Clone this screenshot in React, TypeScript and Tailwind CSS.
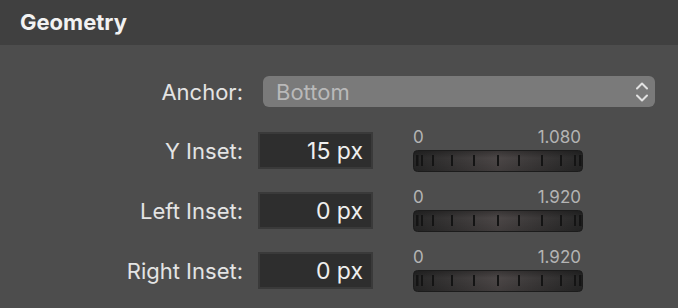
import React from "react";

const font = { fontFamily: "Inter, 'Noto Sans', sans-serif" };

function Track() {
  const ticks = [3, 8, 19, 38, 60, 84, 105, 128, 147, 161, 166];
  return (
    <svg width="170" height="22" viewBox="0 0 170 22" className="block">
      <defs>
        <linearGradient id="tg" x1="0" x2="1" y1="0" y2="0">
          <stop offset="0" stopColor="#282828" />
          <stop offset="0.5" stopColor="#4c4747" />
          <stop offset="1" stopColor="#282828" />
        </linearGradient>
        <linearGradient id="tv" x1="0" x2="0" y1="0" y2="1">
          <stop offset="0" stopColor="#000" stopOpacity="0.25" />
          <stop offset="0.35" stopColor="#000" stopOpacity="0" />
          <stop offset="1" stopColor="#000" stopOpacity="0.15" />
        </linearGradient>
      </defs>
      <rect x="0.5" y="0.5" width="169" height="21" rx="4" fill="url(#tg)" stroke="#1c1c1c" />
      <rect x="1" y="1" width="168" height="20" rx="4" fill="url(#tv)" />
      {ticks.map((t, i) => (
        <rect key={i} x={t} y={5} width={i === 0 || i === ticks.length - 1 ? 2.5 : 2} height={11} fill="#141414" />
      ))}
    </svg>
  );
}

function Row({ label, value, max }: { label: string; value: string; max: string }) {
  return (
    <div className="flex items-start h-[60px]">
      <div className="w-[243px] text-right text-[22px] leading-[37px] h-[37px] mt-[5px] text-[#e4e4e4]">
        {label}
      </div>
      <div className="ml-[15px] mt-[4px] w-[115px] h-[37px] bg-[#2e2e2e] border-2 border-[#3a3a3a] text-right pr-[8px] text-[23px] leading-[34px] text-[#efefef]">
        {value}
      </div>
      <div className="ml-[40px] w-[170px] flex flex-col">
        <div className="flex justify-between text-[17px] leading-[18px] h-[18px] text-[#b4b4b4] pr-[2px]">
          <span>0</span>
          <span>{max}</span>
        </div>
        <div className="mt-[4px]">
          <Track />
        </div>
      </div>
    </div>
  );
}

export default function App() {
  return (
    <div className="w-[678px] h-[308px] bg-[#4d4d4d] overflow-hidden" style={font}>
      <div className="h-[45px] bg-[#404040] flex items-center pl-[20px]">
        <span className="text-[22px] font-bold text-[#f2f2f2]">Geometry</span>
      </div>
      <div className="flex items-center mt-[31px] h-[31px]">
        <div className="w-[243px] text-right text-[22px] leading-[31px] pt-[1px] text-[#e4e4e4]">Anchor:</div>
        <div className="ml-[20px] w-[392px] h-[31px] rounded-[6px] bg-[#7a7a7a] flex items-center justify-between pl-[13px] pr-[7px]">
          <span className="text-[22px] leading-[31px] pt-[1px] text-[#b9b9b9]">Bottom</span>
          <svg width="12" height="20" viewBox="0 0 12 20">
            <polyline points="1,6.5 6,1.5 11,6.5" fill="none" stroke="#e2e2e2" strokeWidth="2" strokeLinecap="round" strokeLinejoin="round" />
            <polyline points="1,13.5 6,18.5 11,13.5" fill="none" stroke="#e2e2e2" strokeWidth="2" strokeLinecap="round" strokeLinejoin="round" />
          </svg>
        </div>
      </div>
      <div className="mt-[21px] flex flex-col">
        <Row label="Y Inset:" value="15 px" max="1.080" />
        <Row label="Left Inset:" value="0 px" max="1.920" />
        <Row label="Right Inset:" value="0 px" max="1.920" />
      </div>
    </div>
  );
}
